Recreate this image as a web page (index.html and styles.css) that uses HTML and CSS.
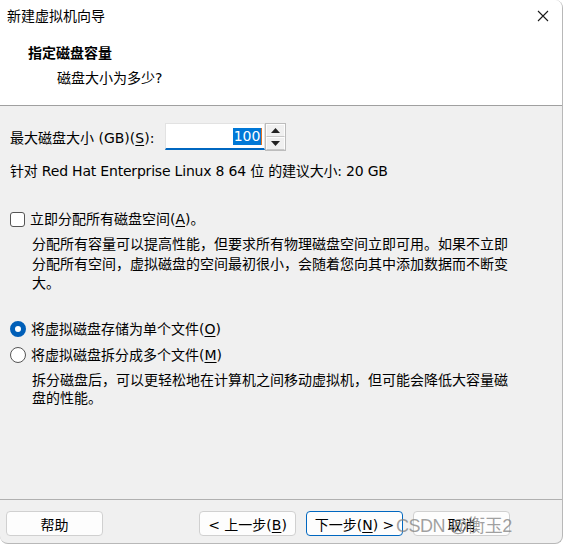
FILE: index.html
```html
<!DOCTYPE html>
<html lang="zh-CN">
<head>
  <meta charset="UTF-8" />
  <title>新建虚拟机向导</title>
  <link rel="stylesheet" href="styles.css">
</head>
<body>
  <div class="window">
    <!-- 标题栏 -->
    <div class="titlebar">
      <span class="title">新建虚拟机向导</span>
      <svg class="close" width="12" height="12" viewBox="0 0 12 12">
        <path d="M1 1L11 11M11 1L1 11" stroke="#1a1a1a" stroke-width="1.1" fill="none"/>
      </svg>
    </div>

    <!-- 页头 -->
    <div class="header">
      <div class="h-title">指定磁盘容量</div>
      <div class="h-sub">磁盘大小为多少?</div>
    </div>

    <!-- 内容 -->
    <div class="content">
      <div class="size-row">
        <span>最大磁盘大小 (GB)(<u>S</u>):</span>
        <div class="spin">
          <div class="spin-input"><span class="sel">100</span><span class="caret"></span></div>
          <div class="spin-btns">
            <div class="spin-btn"><svg width="9" height="5" viewBox="0 0 9 5"><path d="M0 5L4.5 0L9 5Z" fill="#222"/></svg></div>
            <div class="spin-btn"><svg width="9" height="5" viewBox="0 0 9 5"><path d="M0 0L4.5 5L9 0Z" fill="#222"/></svg></div>
          </div>
        </div>
      </div>
      <div class="recommend">针对 Red Hat Enterprise Linux 8 64 位 的建议大小: 20 GB</div>

      <div class="opt opt-check">
        <span class="checkbox"></span>
        <span>立即分配所有磁盘空间(<u>A</u>)。</span>
      </div>
      <div class="desc">分配所有容量可以提高性能，但要求所有物理磁盘空间立即可用。如果不立即分配所有空间，虚拟磁盘的空间最初很小，会随着您向其中添加数据而不断变大。</div>

      <div class="opt opt-radio1">
        <span class="radio checked"></span>
        <span>将虚拟磁盘存储为单个文件(<u>O</u>)</span>
      </div>
      <div class="opt opt-radio2">
        <span class="radio"></span>
        <span>将虚拟磁盘拆分成多个文件(<u>M</u>)</span>
      </div>
      <div class="desc desc-split">拆分磁盘后，可以更轻松地在计算机之间移动虚拟机，但可能会降低大容量磁盘的性能。</div>
    </div>

    <!-- 底部按钮 -->
    <div class="footer">
      <button class="btn">帮助</button>
      <div class="spacer"></div>
      <button class="btn">&lt; 上一步(<u>B</u>)</button>
      <button class="btn primary">下一步(<u>N</u>) &gt;</button>
      <button class="btn">取消</button>
    </div>

    <div class="watermark">CSDN @衡玉2</div>
  </div>
</body>
</html>
```

FILE: styles.css
```css
* {
  margin: 0;
  padding: 0;
  box-sizing: border-box;
}
body {
  background: #fff;
  font-family: "DejaVu Sans", "Noto Sans CJK SC", sans-serif;
  font-size: 14px;
  color: #000;
}
.window {
  position: relative;
  width: 563px;
  height: 544px;
  background: #f0f0f0;
  border-right: 1px solid #b8b8b8;
  border-bottom: 1px solid #b8b8b8;
  border-radius: 0 8px 8px 8px;
  overflow: hidden;
  display: flex;
  flex-direction: column;
}
.titlebar {
  height: 32px;
  background: #fff;
  display: flex;
  align-items: center;
  justify-content: space-between;
  padding: 0 13px 0 7px;
}
.title {
  font-size: 14px;
  line-height: 20px;
}
.header {
  height: 74px;
  background: #fff;
  border-bottom: 1px solid #a0a0a0;
  padding: 10px 0 0 28px;
}
.h-title {
  font-weight: bold;
  line-height: 22px;
}
.h-sub {
  padding-left: 29px;
  line-height: 22px;
  margin-top: 3px;
}
.content {
  flex: 1;
  padding: 17px 0 0 10px;
}
.size-row {
  display: flex;
  align-items: center;
  gap: 11px;
  height: 28px;
}
.spin {
  display: flex;
  height: 28px;
}
.spin-input {
  width: 100px;
  height: 27px;
  background: #fff;
  border: 1px solid #e2e2e2;
  border-bottom: 2px solid #0067c0;
  display: flex;
  align-items: center;
  justify-content: flex-end;
  padding-right: 2px;
  font-size: 14px;
}
.sel {
  background: #0078d7;
  color: #fff;
  line-height: 17px;
  padding: 0 1px;
}
.caret {
  width: 1px;
  height: 17px;
  background: #e07020;
}
.spin-btns {
  width: 21px;
  height: 28px;
  border: 1px solid #bcbcbc;
  display: flex;
  flex-direction: column;
  background: #f0f0f0;
}
.spin-btn {
  flex: 1;
  display: flex;
  align-items: center;
  justify-content: center;
  border: 1px solid #fdfdfd;
  border-bottom-color: #c8c8c8;
}
.recommend {
  margin-top: 10px;
  line-height: 20px;
  letter-spacing: -0.2px;
}
.opt {
  display: flex;
  align-items: center;
  gap: 5px;
  line-height: 20px;
}
.opt-check {
  margin-top: 28px;
}
.opt-radio1 {
  margin-top: 25px;
}
.opt-radio2 {
  margin-top: 6px;
}
.checkbox {
  width: 15px;
  height: 15px;
  border: 1px solid #555;
  border-radius: 3px;
  background: #fff;
}
.radio {
  width: 16px;
  height: 16px;
  border: 1px solid #555;
  border-radius: 50%;
  background: #fff;
}
.radio.checked {
  border: 5px solid #005fb8;
}
.desc {
  padding: 0 50px 0 22px;
  margin-top: 6px;
  line-height: 19.5px;
}
.desc-split {
  line-height: 18.5px;
}
u {
  text-underline-offset: 2px;
}
.footer {
  height: 44px;
  border-top: 1px solid #b0b0b0;
  display: flex;
  align-items: flex-start;
  padding: 11px 0 0 6px;
  gap: 10px;
}
.spacer {
  flex: 1;
}
.btn {
  width: 97px;
  height: 25px;
  font-family: inherit;
  font-size: 14px;
  background: #fdfdfd;
  border: 1px solid #d0d0d0;
  border-radius: 4px;
}
.btn:last-child {
  margin-right: 52px;
}
.btn.primary {
  border: 1px solid #0067c0;
}
.watermark {
  position: absolute;
  left: 396px;
  top: 511px;
  font-family: "Liberation Sans", "Noto Sans CJK SC", sans-serif;
  font-size: 18px;
  letter-spacing: -0.5px;
  color: rgba(130, 130, 130, 0.75);
  pointer-events: none;
}
```
